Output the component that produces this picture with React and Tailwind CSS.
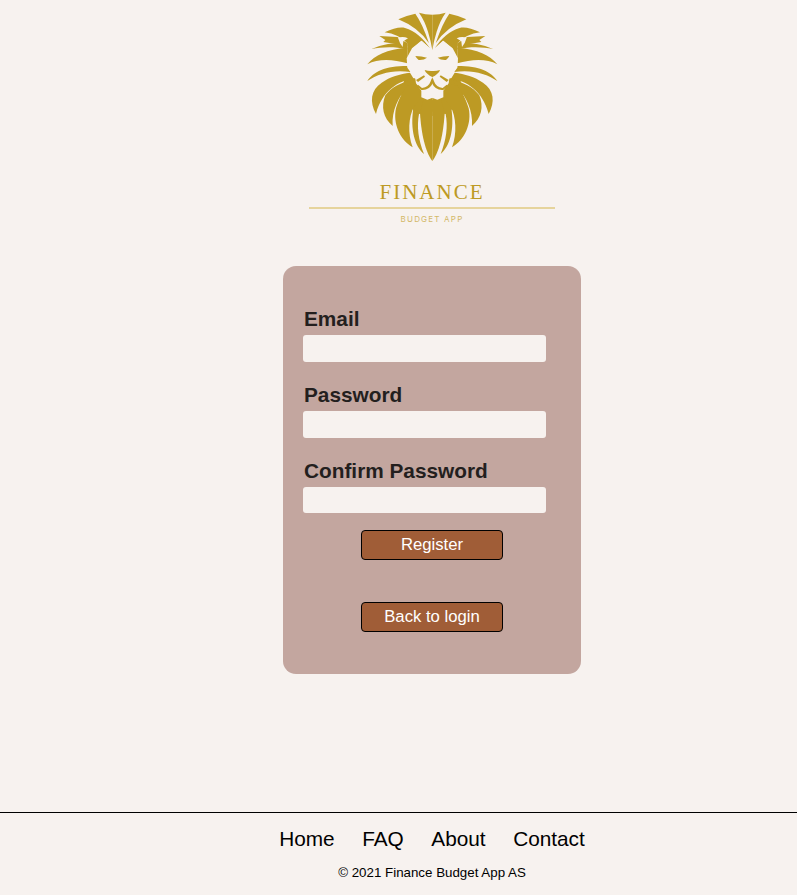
const G = "#bd9a24";
const BG = "#f7f2ef";

const halfPaths = [
  // top wedge
  "M207 38 Q225 44 247 44 L247 150 Q242 120 234 95 Q224 62 207 38Z",
  "M145 58 Q170 46 196 41 Q218 72 237 130 Q205 82 145 58Z",
  "M104 97 C130 84 152 80 165 84 C195 92 220 115 240 145 L215 122 L190 143 L172 175 L172 130 Q145 102 104 97Z",
  // upper fingers
  "M88 108 L142 111 L172 130 L172 138 L100 126 L106 120Z",
  "M65 147 C95 132 130 128 172 128 L172 148 C130 138 95 141 65 147Z",
  "M52 193 C75 165 110 148 172 143 L172 190 C130 178 85 175 52 193Z",
  "M52 243 C70 215 105 198 172 198 L182 216 C130 208 85 220 52 243Z",
  // solid mass under the face
  "M165 235 L247 235 L247 348 L190 330 L150 280Z",
  // lower mane
  "M78 342 C58 305 62 270 95 248 C120 230 150 222 180 218 L192 238 C145 240 95 275 78 342Z",
  "M128 378 C100 355 92 320 106 286 C125 262 150 248 194 238 L172 258 C145 295 125 330 128 378Z",
  "M188 442 C150 420 128 370 138 325 C145 300 160 270 172 258 L198 250 L215 290 L192 320 C176 350 172 400 188 442Z",
  "M222 462 C195 440 180 390 190 325 L215 290 L247 300 L247 335 L207 342 C200 380 205 420 222 462Z",
  "M247 483 C232 465 215 420 210 340 L220 300 L247 300Z",
];

function Lion() {
  return (
    <svg viewBox="0 0 495 510" width="165" height="170" className="block">
      <g fill={G}>
        {halfPaths.map((d) => <path key={d} d={d} />)}
        <g transform="translate(494 0) scale(-1 1)">
          {halfPaths.map((d) => <path key={d} d={d} />)}
        </g>
      </g>
      {[0, 1].map((m) => (
        <g key={m} transform={m ? "translate(494 0) scale(-1 1)" : undefined}>
          <path fill={BG} d="M144 113 Q160 108 174 115 L160 124 L158 141 Q148 128 144 113Z" />
          <path fill={BG} d="M248 152 L214 122 L186 145 L170 175 L172 203 L196 236 L198 250 L214 272 L214 292 L232 299 L248 293Z" />
          <path fill={G} d="M196 168 Q215 168 231 173 Q222 181 206 180 Q200 176 196 168Z" />
          <path fill={G} d="M224 210 Q236 214 248 213 L248 232 Q238 228 233 222 Q226 218 224 210Z" />
          <path fill={G} d="M248 232 L248 250 Q238 272 214 270 L200 258 L204 254 L216 264 Q236 262 242 244 Q244 236 248 232Z" />
          <path fill={G} d="M198 240 L222 226 L225 230 L204 246Z" />
        </g>
      ))}
    </svg>
  );
}

function Field({ label, h }) {
  return (
    <div className="flex flex-col">
      <label className="block h-[29px] pl-px text-[20.8px] leading-[26px] font-bold text-[#231f1e]">{label}</label>
      <div className={h ? "h-[26px] w-[243px] rounded-[3px] bg-[#f7f2ef]" : "h-[27px] w-[243px] rounded-[3px] bg-[#f7f2ef]"} />
    </div>
  );
}

function Btn({ children }) {
  return (
    <button className="block h-[30px] w-[142px] rounded-[4px] border border-black bg-[#a05d37] text-[16.7px] leading-[26px] text-white">
      {children}
    </button>
  );
}

export default function App() {
  return (
    <div className="flex h-[895px] flex-col bg-[#f7f2ef] font-['Liberation_Sans',Arial,sans-serif]">
      <main className="flex flex-1 flex-col items-center pl-[67px]">
        <Lion />
        <div className="mt-[9px] flex w-[246px] flex-col items-center">
          <div className="h-[26px] font-['Liberation_Serif',serif] text-[21px] leading-[26px] tracking-[2px] text-[#bd9a24]">FINANCE</div>
          <div className="mt-[2px] h-[2px] w-full bg-[#e6d49c]" />
          <div className="mt-[5px] h-[10px] font-['Inter',sans-serif] text-[8px] leading-[10px] tracking-[1.2px] text-[#d3b868]">BUDGET APP</div>
        </div>
        <section className="mt-[42px] flex h-[408px] w-[298px] flex-col rounded-[13px] bg-[#c3a69f] px-5 pt-[40px]">
          <div className="flex flex-col gap-[20px]">
            <Field label="Email" />
            <Field label="Password" />
            <Field label="Confirm Password" h />
          </div>
          <div className="mt-[17px] flex flex-col items-center gap-[42px]">
            <Btn>Register</Btn>
            <Btn>Back to login</Btn>
          </div>
        </section>
      </main>
      <footer className="flex h-[83px] flex-col items-center border-t border-black pl-[67px] text-black">
        <nav className="mt-[14px] flex h-[24px] items-center gap-[27.5px] text-[20.8px] leading-[24px]">
          <a>Home</a><a>FAQ</a><a>About</a><a>Contact</a>
        </nav>
        <p className="mt-[14px] text-[13.33px] leading-[16px]">© 2021 Finance Budget App AS</p>
      </footer>
    </div>
  );
}
